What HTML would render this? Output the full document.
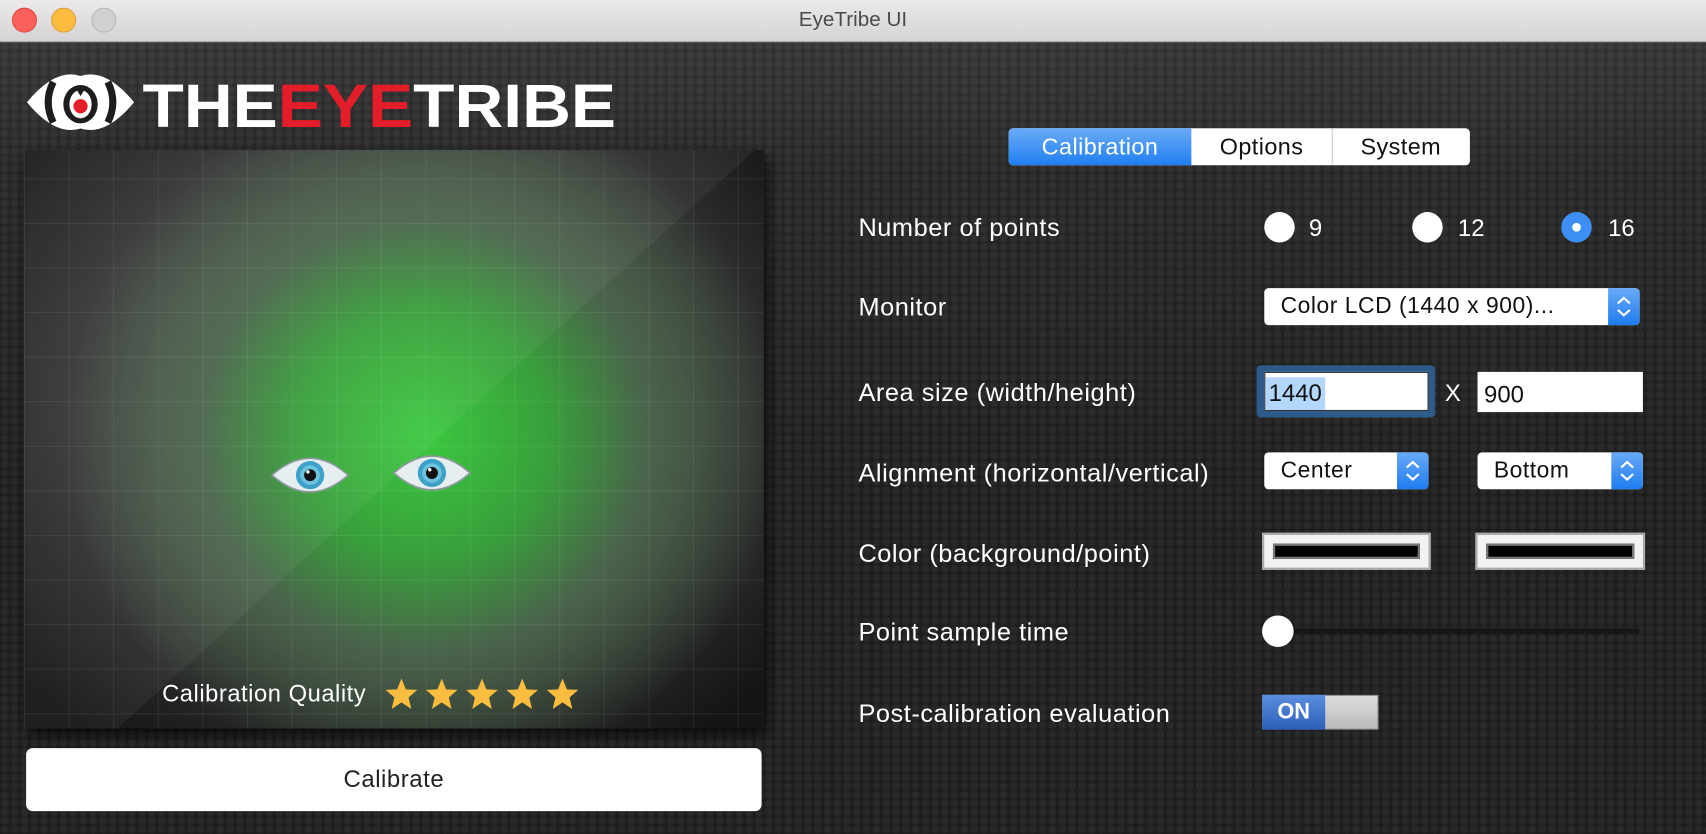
<!DOCTYPE html>
<html><head><meta charset="utf-8"><style>
html,body{margin:0;padding:0;width:1706px;height:834px;overflow:hidden;background:#222;}
#w{position:absolute;left:0;top:0;width:1568px;height:767px;transform:scale(1.08801,1.08735);transform-origin:0 0;font-family:"Liberation Sans",sans-serif;}
.a{position:absolute;}
#title{left:0;top:0;width:1568px;height:38px;background:linear-gradient(#ebe9eb,#d5d3d5);border-bottom:1px solid #b5b5b5;text-align:center;line-height:38px;font-size:19px;color:#4a4a4a;}
.tl{top:7px;width:23px;height:23px;border-radius:50%;}
#body{left:0;top:39px;width:1568px;height:728px;background-color:#1f1f1f;
background-image:radial-gradient(circle at 50% 50%,rgba(255,255,255,0.05) 3px,transparent 4px),linear-gradient(#333 0,#262626 120px,#1e1e1e 400px);
background-size:9px 8px,100% 100%;}
.lbl{color:#fff;font-size:23.3px;letter-spacing:0.5px;left:789px;}
.radio{width:28px;height:28px;border-radius:50%;background:#fff;}
.num{color:#fff;font-size:22px;}
.pop{background:#fff;border-radius:4px;height:34px;font-size:21px;letter-spacing:0.5px;line-height:34px;color:#111;box-sizing:border-box;}
.step{position:absolute;right:0;top:0;width:29px;height:34px;background:linear-gradient(#69aaf8,#1f7cf0);border-radius:0 4px 4px 0;}
.well{height:34px;background:#f2f2f2;border:2px solid #aaa;box-sizing:border-box;}
.well div{position:absolute;left:8px;right:8px;top:8px;bottom:8px;background:#000;border:2px solid #777;}
</style></head><body><div id="w">
<div id="title" class="a">EyeTribe UI</div>
<div class="a tl" style="left:11px;background:#fc605b;border:1px solid #de4a44;box-sizing:border-box"></div>
<div class="a tl" style="left:47px;background:#fdbc40;border:1px solid #dea236;box-sizing:border-box"></div>
<div class="a tl" style="left:84px;background:#d0d0d0;border:1px solid #b8b8b8;box-sizing:border-box"></div>
<div id="body" class="a"></div>
<!-- logo -->
<svg class="a" style="left:22px;top:68px" width="104" height="52" viewBox="0 0 110 56">
<path d="M2 28 Q30 -6 55 2 Q80 -6 108 28 Q80 62 55 54 Q30 62 2 28Z" fill="#fff"/>
<path d="M28 8 Q18 28 28 48" stroke="#1d1d1d" stroke-width="7" fill="none"/>
<path d="M82 8 Q92 28 82 48" stroke="#1d1d1d" stroke-width="7" fill="none"/>
<ellipse cx="55" cy="30" rx="17" ry="19" fill="#1d1d1d"/>
<ellipse cx="55" cy="30" rx="11" ry="14" fill="#fff"/>
<path d="M49 12 L55 22 L61 12Z" fill="#1d1d1d"/>
<circle cx="55" cy="32" r="7" fill="#e41d2a"/>
</svg>
<div class="a" style="left:131px;top:66px;font-size:56px;font-weight:bold;color:#fff;letter-spacing:0px;line-height:64px;transform:scaleX(1.11);transform-origin:0 0">THE<span style="color:#e41d2a">EYE</span>TRIBE</div>
<!-- image panel -->
<div class="a" style="left:22px;top:138px;width:680px;height:532px;overflow:hidden;box-shadow:4px 6px 12px rgba(0,0,0,.7);
background:
linear-gradient(rgba(255,255,255,.07) 1px,transparent 1px) 0 -15px/41px 41px,
linear-gradient(90deg,rgba(255,255,255,.07) 1px,transparent 1px) 0 0/41px 41px,
radial-gradient(ellipse 330px 320px at 368px 262px,#3cc840 0%,#38a03b 35%,#4a644b 62%,rgba(60,60,60,.0) 100%),
radial-gradient(ellipse 460px 380px at 340px 230px,#474747 45%,#151515 100%);">
<div class="a" style="left:0;top:0;width:680px;height:532px;background:rgba(255,255,255,.05);clip-path:polygon(0 0,672px 0,86px 532px,0 532px)"></div>
<svg class="a" style="left:226px;top:278px" width="74" height="42" viewBox="0 0 74 42"><path d="M2 21 Q37 -10 72 21 Q37 52 2 21Z" fill="#e6eef0" stroke="#8a9a9a" stroke-width="1.5"/><circle cx="37" cy="21" r="13" fill="#3fa0c8"/><circle cx="37" cy="21" r="9" fill="#6cc3e0"/><circle cx="37" cy="21" r="5.5" fill="#111"/><circle cx="35" cy="18" r="1.6" fill="#fff"/></svg>
<svg class="a" style="left:338px;top:276px" width="74" height="42" viewBox="0 0 74 42"><path d="M2 21 Q37 -10 72 21 Q37 52 2 21Z" fill="#e6eef0" stroke="#8a9a9a" stroke-width="1.5"/><circle cx="37" cy="21" r="13" fill="#3fa0c8"/><circle cx="37" cy="21" r="9" fill="#6cc3e0"/><circle cx="37" cy="21" r="5.5" fill="#111"/><circle cx="35" cy="18" r="1.6" fill="#fff"/></svg>
<div class="a" style="left:127px;top:487px;color:#fff;font-size:21.8px;letter-spacing:0.5px">Calibration Quality</div>
<svg class="a" style="left:332px;top:485px" width="185" height="32" viewBox="0 0 185 32">
<defs><polygon id="s" points="15,1 19,11 29.5,11.5 21.5,18.5 24,29 15,23 6,29 8.5,18.5 0.5,11.5 11,11" fill="#fbbd40"/></defs>
<use href="#s" x="0"/><use href="#s" x="37"/><use href="#s" x="74"/><use href="#s" x="111"/><use href="#s" x="148"/></svg>
</div>
<div class="a" style="left:24px;top:688px;width:676px;height:58px;background:#fff;border-radius:6px;text-align:center;line-height:58px;font-size:22px;letter-spacing:0.5px;color:#222">Calibrate</div>
<!-- tabs -->
<div class="a" style="left:927px;top:118px;width:424px;height:34px;background:#fff;border-radius:4px;font-size:21.5px;letter-spacing:0.4px;line-height:34px;color:#111">
<div class="a" style="left:0;top:0;width:168px;height:34px;background:linear-gradient(#6aabf8,#1f7ff1);border-radius:4px 0 0 4px;color:#fff;text-align:center">Calibration</div>
<div class="a" style="left:168px;top:0;width:129px;text-align:center">Options</div>
<div class="a" style="left:297px;top:0;width:1px;height:34px;background:#ccc"></div>
<div class="a" style="left:297px;top:0;width:127px;text-align:center">System</div>
</div>
<div class="a lbl" style="top:196px">Number of points</div>
<div class="a lbl" style="top:269px">Monitor</div>
<div class="a lbl" style="top:348px">Area size (width/height)</div>
<div class="a lbl" style="top:422px">Alignment (horizontal/vertical)</div>
<div class="a lbl" style="top:496px">Color (background/point)</div>
<div class="a lbl" style="top:568px">Point sample time</div>
<div class="a lbl" style="top:643px">Post-calibration evaluation</div>
<div class="a radio" style="left:1162px;top:195px"></div><div class="a num" style="left:1203px;top:197px">9</div>
<div class="a radio" style="left:1298px;top:195px"></div><div class="a num" style="left:1340px;top:197px">12</div>
<div class="a radio" style="left:1435px;top:195px;background:#3d8ef5"></div><div class="a" style="left:1445px;top:205px;width:8px;height:8px;border-radius:50%;background:#fff"></div><div class="a num" style="left:1478px;top:197px">16</div>
<div class="a pop" style="left:1162px;top:265px;width:345px;padding-left:15px">Color LCD (1440 x 900)...<div class="step"><svg width="29" height="34"><path d="M9 14 L14.5 9 L20 14 M9 20 L14.5 25 L20 20" stroke="#fff" stroke-width="2" fill="none"/></svg></div></div>
<div class="a" style="left:1155px;top:336px;width:164px;height:48px;background:#2f5b8a;border-radius:4px"></div>
<div class="a" style="left:1162px;top:342px;width:151px;height:36px;background:#fff;border:1px solid #333;box-sizing:border-box;font-size:22px;line-height:38px;color:#111"><span style="background:#b3d6fc;padding:2px 3px 3px 3px">1440</span></div>
<div class="a" style="left:1328px;top:349px;color:#fff;font-size:22px">X</div>
<div class="a" style="left:1358px;top:342px;width:152px;height:37px;background:#fff;font-size:22px;line-height:42px;color:#111;padding-left:6px;box-sizing:border-box">900</div>
<div class="a pop" style="left:1162px;top:416px;width:151px;padding-left:15px">Center<div class="step"><svg width="29" height="34"><path d="M9 14 L14.5 9 L20 14 M9 20 L14.5 25 L20 20" stroke="#fff" stroke-width="2" fill="none"/></svg></div></div>
<div class="a pop" style="left:1358px;top:416px;width:152px;padding-left:15px">Bottom<div class="step"><svg width="29" height="34"><path d="M9 14 L14.5 9 L20 14 M9 20 L14.5 25 L20 20" stroke="#fff" stroke-width="2" fill="none"/></svg></div></div>
<div class="a well" style="left:1160px;top:490px;width:155px"><div></div></div>
<div class="a well" style="left:1356px;top:490px;width:156px"><div></div></div>
<div class="a" style="left:1180px;top:578px;width:327px;height:5px;background:#161616;border-radius:3px"></div>
<div class="a" style="left:1160px;top:566px;width:29px;height:29px;border-radius:50%;background:#fff"></div>
<div class="a" style="left:1160px;top:639px;width:107px;height:32px;background:linear-gradient(#ddd,#bbb);border:1px solid #999;box-sizing:border-box"></div>
<div class="a" style="left:1160px;top:639px;width:58px;height:32px;background:linear-gradient(#5b8ee0,#2d5fb8);color:#fff;font-weight:bold;font-size:20px;line-height:32px;text-align:center">ON</div>
</div></body></html>
